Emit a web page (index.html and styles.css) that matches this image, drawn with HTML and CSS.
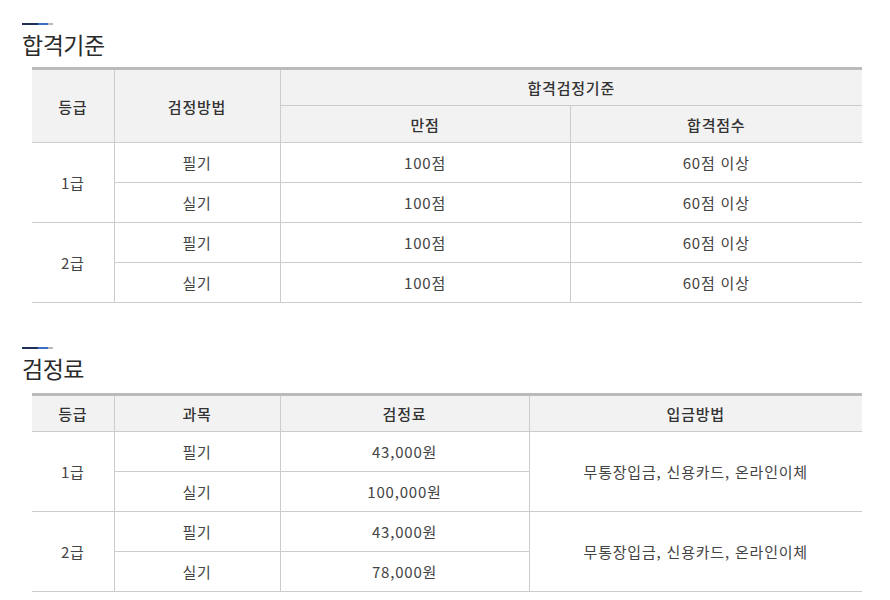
FILE: index.html
```html
<!DOCTYPE html>
<html lang="ko">
<head>
<meta charset="utf-8">
<link rel="stylesheet" href="styles.css">
</head>
<body>
<div class="page">
  <section class="sec">
    <div class="bar"><span class="b1"></span><span class="b2"></span><span class="b3"></span></div>
    <h2 class="title">합격기준</h2>
    <table class="tbl t1">
      <colgroup><col class="c1"><col class="c2"><col class="c3"><col class="c4"></colgroup>
      <thead>
        <tr class="hr"><th rowspan="2">등급</th><th rowspan="2">검정방법</th><th colspan="2">합격검정기준</th></tr>
        <tr class="hr"><th>만점</th><th>합격점수</th></tr>
      </thead>
      <tbody>
        <tr><td rowspan="2">1급</td><td>필기</td><td>100점</td><td>60점 이상</td></tr>
        <tr><td>실기</td><td>100점</td><td>60점 이상</td></tr>
        <tr><td rowspan="2">2급</td><td>필기</td><td>100점</td><td>60점 이상</td></tr>
        <tr><td>실기</td><td>100점</td><td>60점 이상</td></tr>
      </tbody>
    </table>
  </section>
  <section class="sec sec2">
    <div class="bar"><span class="b1"></span><span class="b2"></span><span class="b3"></span></div>
    <h2 class="title">검정료</h2>
    <table class="tbl t2">
      <colgroup><col class="c1"><col class="c2"><col class="d3"><col class="d4"></colgroup>
      <thead>
        <tr class="hr"><th>등급</th><th>과목</th><th>검정료</th><th>입금방법</th></tr>
      </thead>
      <tbody>
        <tr><td rowspan="2">1급</td><td>필기</td><td>43,000원</td><td rowspan="2">무통장입금, 신용카드, 온라인이체</td></tr>
        <tr><td>실기</td><td>100,000원</td></tr>
        <tr><td rowspan="2">2급</td><td>필기</td><td>43,000원</td><td rowspan="2">무통장입금, 신용카드, 온라인이체</td></tr>
        <tr><td>실기</td><td>78,000원</td></tr>
      </tbody>
    </table>
  </section>
</div>
</body>
</html>
```

FILE: styles.css
```css
* { box-sizing: border-box; }
body {
  margin: 0;
  background: #fff;
  font-family: "Noto Sans CJK KR", "Noto Sans", sans-serif;
  color: #333;
}
.page { padding: 23px 0 0 22px; }
.bar { display: flex; height: 2px; }
.b1 { width: 16px; background: #1f2f57; }
.b2 { width: 10px; background: #3a6fc4; }
.b3 { width: 5px; background: #b9b9b9; }
.title {
  margin: 4px 0 0 0;
  font-size: 23px;
  font-weight: 400;
  line-height: 30px;
  color: #2b2b2b;
  letter-spacing: -0.5px;
}
.tbl {
  margin: 8px 0 0 10px;
  width: 830px;
  border-collapse: collapse;
  table-layout: fixed;
  border-top: 3px solid #bbb;
  font-size: 15px;
  letter-spacing: 0.8px;
}
.tbl th, .tbl td {
  border: 1px solid #ccc;
  text-align: center;
  vertical-align: middle;
  padding: 0;
}
.tbl tr > :first-child { border-left: none; }
.tbl tr > :last-child { border-right: none; }
.tbl th {
  background: #f2f2f2;
  font-weight: 500;
  color: #333;
  height: 37px;
}
.t2 th { height: 37px; }
.tbl td {
  height: 40px;
  color: #444;
  font-weight: 400;
}
.tbl thead tr:first-child th { border-top: none; }
.t1 tbody tr:nth-child(1) td[rowspan], .t1 tbody tr:nth-child(3) td[rowspan] { border-right: 1px solid #ccc; }
.c1 { width: 82px; }
.c2 { width: 166px; }
.c3 { width: 290px; }
.c4 { width: 292px; }
.d3 { width: 249px; }
.d4 { width: 333px; }
.sec2 { margin-top: 44px; }
.sec2 .tbl { margin-top: 10px; }
```
